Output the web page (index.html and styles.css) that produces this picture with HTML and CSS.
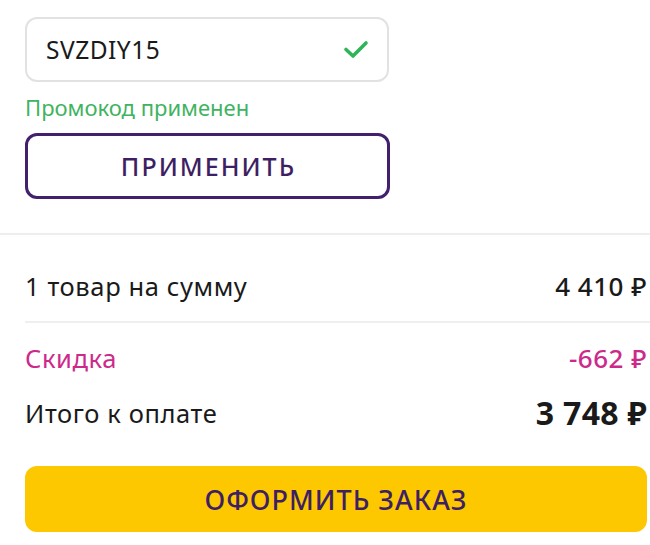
FILE: index.html
```html
<!DOCTYPE html>
<html lang="ru">
<head>
<meta charset="utf-8">
<link rel="stylesheet" href="styles.css">
</head>
<body>
<div class="page">
  <section class="promo">
    <div class="promo-input">
      <span class="promo-code">SVZDIY15</span>
      <svg class="check" width="26" height="20" viewBox="0 0 26 20"><path d="M3 10.5 L10 17 L23 4" fill="none" stroke="#2fb45a" stroke-width="3.6" stroke-linecap="round" stroke-linejoin="round"/></svg>
    </div>
    <div class="promo-status">Промокод применен</div>
    <button class="btn-outline">ПРИМЕНИТЬ</button>
  </section>
  <div class="divider"></div>
  <section class="summary">
    <div class="row row-sum">
      <span>1 товар на сумму</span>
      <span class="amount">4 410 ₽</span>
    </div>
    <div class="row-divider"></div>
    <div class="row row-discount">
      <span>Скидка</span>
      <span class="amount">-662 ₽</span>
    </div>
    <div class="row row-total">
      <span>Итого к оплате</span>
      <span class="amount total">3 748 ₽</span>
    </div>
    <button class="btn-primary">ОФОРМИТЬ ЗАКАЗ</button>
  </section>
</div>
</body>
</html>
```
FILE: styles.css
```css
* { box-sizing: border-box; }
html, body { margin: 0; padding: 0; background: #fff; }
body { font-family: "Noto Sans", "Lato", sans-serif; color: #1a1a1a; }
.page { width: 650px; }
.promo { padding: 17px 0 0 25px; }
.promo-input {
  width: 364px; height: 65px;
  border: 2px solid #e2e2e2; border-radius: 12px;
  display: flex; align-items: center; justify-content: space-between;
  padding: 0 18px 0 19px;
}
.promo-code { font-size: 24.5px; letter-spacing: 0.5px; color: #1a1a1a; line-height: 30px; }
.check { display: block; margin-top: -2px; }
.promo-status { color: #3fb361; font-size: 22px; margin-top: 11px; line-height: 28px; }
.btn-outline {
  display: block; margin-top: 12px;
  width: 365px; height: 66px;
  border: 3px solid #43206d; border-radius: 12px; background: #fff;
  font-family: inherit; font-size: 25px; font-weight: 500; letter-spacing: 2px; color: #3f1f63;
  padding: 0 0 0 2px;
}
.divider { height: 2px; background: #eeeeee; margin-top: 34px; }
.summary { padding: 0 3px 0 25px; }
.row {
  display: flex; justify-content: space-between; align-items: center;
  font-size: 25.5px; letter-spacing: 0.6px; height: 32px; line-height: 32px;
}
.row-sum { margin-top: 35px; margin-bottom: 19px; }
.amount { font-size: 26px; font-weight: 500; letter-spacing: 0.5px; }
.row-divider { height: 2px; background: #efefef; margin-right: -3px; }
.row-discount { margin-top: 19px; color: #cc2a8b; }
.row-total { margin-top: 23px; }
.amount.total { font-size: 32px; font-weight: 700; letter-spacing: 0.3px; }
.btn-primary {
  display: block; margin-top: 37px; width: 100%; height: 66px;
  border: none; border-radius: 12px; background: #fdc800;
  font-family: inherit; font-size: 27px; font-weight: 500; letter-spacing: 1px; color: #3f1f63;
}
```
